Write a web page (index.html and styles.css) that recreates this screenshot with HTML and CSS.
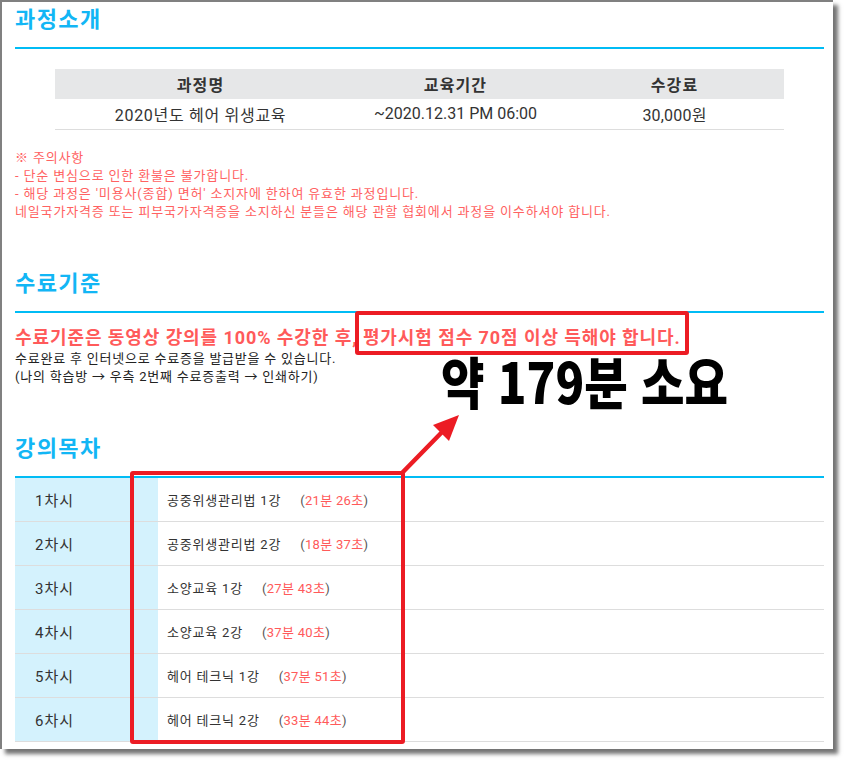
FILE: index.html
```html
<!DOCTYPE html>
<html lang="ko">
<head>
<meta charset="utf-8">
<title>과정소개</title>
<link rel="stylesheet" href="styles.css">
</head>
<body>
<div class="frame">
  <section class="sec">
    <h2 class="sec-title">과정소개</h2>
    <table class="course">
      <thead>
        <tr><th class="col-name">과정명</th><th class="col-period">교육기간</th><th class="col-fee">수강료</th></tr>
      </thead>
      <tbody>
        <tr><td class="td-name">2020년도 헤어 위생교육</td><td class="td-period">~2020.12.31 PM 06:00</td><td class="td-fee">30,000원</td></tr>
      </tbody>
    </table>
    <div class="notice">
      <p>※ 주의사항</p>
      <p>- 단순 변심으로 인한 환불은 불가합니다.</p>
      <p>- 해당 과정은 '미용사(종합) 면허' 소지자에 한하여 유효한 과정입니다.</p>
      <p>네일국가자격증 또는 피부국가자격증을 소지하신 분들은 해당 관할 협회에서 과정을 이수하셔야 합니다.</p>
    </div>
  </section>

  <section class="sec">
    <h2 class="sec-title">수료기준</h2>
    <div class="criteria">
      <p class="criteria-main">수료기준은 동영상 강의를 100% 수강한 후, 평가시험 점수 70점 이상 득해야 합니다.</p>
      <p>수료완료 후 인터넷으로 수료증을 발급받을 수 있습니다.</p>
      <p>(나의 학습방 → 우측 2번째 수료증출력 → 인쇄하기)</p>
    </div>
  </section>

  <section class="sec">
    <h2 class="sec-title">강의목차</h2>
    <div class="lessons">
      <div class="lesson"><div class="lesson-no">1차시</div><div class="lesson-title">공중위생관리법 1강<span class="dur">(<em>21분 26초</em>)</span></div></div>
      <div class="lesson"><div class="lesson-no">2차시</div><div class="lesson-title">공중위생관리법 2강<span class="dur">(<em>18분 37초</em>)</span></div></div>
      <div class="lesson"><div class="lesson-no">3차시</div><div class="lesson-title">소양교육 1강<span class="dur">(<em>27분 43초</em>)</span></div></div>
      <div class="lesson"><div class="lesson-no">4차시</div><div class="lesson-title">소양교육 2강<span class="dur">(<em>37분 40초</em>)</span></div></div>
      <div class="lesson"><div class="lesson-no">5차시</div><div class="lesson-title">헤어 테크닉 1강<span class="dur">(<em>37분 51초</em>)</span></div></div>
      <div class="lesson"><div class="lesson-no">6차시</div><div class="lesson-title">헤어 테크닉 2강<span class="dur">(<em>33분 44초</em>)</span></div></div>
    </div>
  </section>
</div>

<div class="mark mark-score"></div>
<div class="mark mark-list"></div>
<svg class="arrow" width="844" height="760" viewBox="0 0 844 760" aria-hidden="true">
  <line x1="402" y1="473" x2="445" y2="429" stroke="#ec1c24" stroke-width="4.5" stroke-linecap="round"/>
  <polygon points="459,415 449,441 433,425" fill="#ec1c24"/>
</svg>
<div class="callout">약 179분 소요</div>
</body>
</html>
```

FILE: styles.css
```css
* { box-sizing: border-box; }

html, body {
  margin: 0;
  padding: 0;
}

body {
  position: relative;
  width: 844px;
  height: 760px;
  overflow: hidden;
  background: #ffffff;
  font-family: Roboto, "Noto Sans CJK KR", "Noto Sans", sans-serif;
  color: #333333;
}

p { margin: 0; }

.frame {
  width: 833px;
  height: 749px;
  background: #ffffff;
  border-left: 2px solid #808080;
  border-top: 2px solid #808080;
  box-shadow: 5px 5px 4px rgba(0, 0, 0, 0.55);
  padding: 3px 9px 0 13px;
}

.sec + .sec { margin-top: 48px; }

.sec-title {
  margin: 0;
  font-size: 22px;
  line-height: 30px;
  font-weight: 700;
  letter-spacing: 1.4px;
  color: #12b6f5;
  padding-bottom: 12px;
  border-bottom: 2px solid #00bcf5;
}

/* course table */
.course {
  border-collapse: collapse;
  width: 729px;
  margin: 20px 0 0 40px;
  font-size: 16px;
  color: #333333;
}
.course th {
  height: 30px;
  padding: 0;
  background: #e6e7e8;
  font-weight: 700;
  letter-spacing: 1.1px;
  text-align: center;
}
.course .col-name { width: 291px; }
.course .col-period { width: 219px; }
.course .col-fee { width: 219px; }
.course td {
  height: 30px;
  padding: 0;
  text-align: center;
  border-bottom: 1px solid #dddddd;
}
.course .td-name { letter-spacing: 0.7px; }
.course .td-fee { letter-spacing: 0.2px; }

.notice {
  margin-top: 19px;
  font-size: 13px;
  line-height: 18px;
  letter-spacing: 0.85px;
  color: #ff6262;
}

/* criteria */
.criteria {
  margin-top: 13px;
  font-size: 13px;
  line-height: 18px;
  letter-spacing: 0.78px;
  color: #222222;
}
.criteria .criteria-main {
  font-size: 18px;
  line-height: 24px;
  font-weight: 700;
  letter-spacing: 0.92px;
  color: #ff5a5a;
}

/* lessons */
.lesson {
  display: grid;
  grid-template-columns: 143px 1fr;
  height: 44px;
  border-bottom: 1px solid #dddddd;
}
.lesson-no {
  display: flex;
  align-items: center;
  padding-left: 20px;
  background: #d4f2fd;
  font-size: 15px;
  letter-spacing: 1px;
  color: #333333;
}
.lesson-title {
  display: flex;
  align-items: center;
  padding-left: 9px;
  font-size: 13px;
  letter-spacing: 0.8px;
  color: #333333;
  white-space: nowrap;
}
.dur {
  margin-left: 19px;
  letter-spacing: 0.3px;
  color: #555555;
}
.dur em {
  font-style: normal;
  color: #ff5a5a;
}

/* annotations */
.mark {
  position: absolute;
  border: 4px solid #ec1c24;
  border-radius: 3px;
}
.mark-score {
  left: 355px;
  top: 311px;
  width: 334px;
  height: 44px;
}
.mark-list {
  left: 130px;
  top: 471px;
  width: 275px;
  height: 273px;
}
.arrow {
  position: absolute;
  left: 0;
  top: 0;
  pointer-events: none;
}
.callout {
  position: absolute;
  left: 441px;
  top: 350px;
  font-family: "Noto Sans CJK KR", sans-serif;
  font-size: 56px;
  line-height: 60px;
  font-weight: 900;
  letter-spacing: 0;
  color: #000000;
  white-space: nowrap;
  transform: scaleX(0.845);
  transform-origin: left center;
}
```
